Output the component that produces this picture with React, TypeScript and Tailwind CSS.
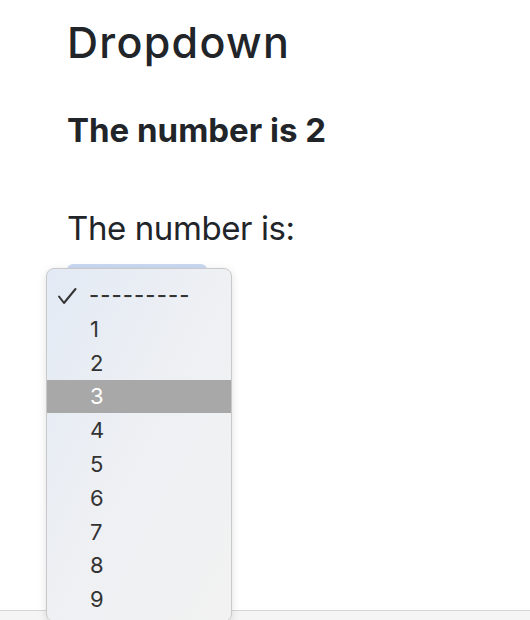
import React from "react";

const items = ["1", "2", "3", "4", "5", "6", "7", "8", "9"];

export default function App() {
  return (
    <div
      className="relative flex h-[620px] w-[530px] flex-col overflow-hidden bg-white text-[#212529]"
      style={{ fontFamily: "Inter, 'Liberation Sans', sans-serif" }}
    >
      <div className="flex-1 pl-[67px] pt-[17px]">
        <h1 className="text-[43px] font-medium leading-[1.2] tracking-[1.3px]">Dropdown</h1>
        <h3 className="mt-[42px] text-[33px] font-bold leading-[1.2] tracking-[0px]">The number is 2</h3>
        <p className="mt-[59px] text-[33px] font-normal leading-[1.2] tracking-[-0.4px]">The number is:</p>
        <div className="mt-[15px] h-[34px] w-[140px] rounded-md bg-gradient-to-b from-[#cbdaf2] to-[#b9cdee]" />
      </div>
      <div className="h-[10px] border-t border-[#d6d6d6] bg-[#f5f5f5]" />

      <div className="absolute left-[46px] top-[268px] h-[354px] w-[186px] rounded-lg border border-[#c9c9c9] bg-gradient-to-br from-[#e3eaf5] via-[#eef0f3] to-[#f2f2f2] pt-[9px] text-[22px] leading-none text-[#333] shadow-[0_2px_8px_rgba(0,0,0,0.12)]">
        <div className="flex h-[34px] items-center">
          <svg width="42" height="34" viewBox="0 0 42 34" className="shrink-0">
            <polyline points="12,18.5 17,25 28.5,11" fill="none" stroke="#333" strokeWidth="2" strokeLinecap="round" strokeLinejoin="round" />
          </svg>
          <span className="font-medium tracking-[1.1px]">---------</span>
        </div>
        {items.map((n) => (
          <div
            key={n}
            className={
              n === "3"
                ? "flex h-[33.8px] items-center bg-[#a8a8a8] pl-[43px] text-white"
                : "flex h-[33.8px] items-center pl-[43px]"
            }
          >
            {n}
          </div>
        ))}
      </div>
    </div>
  );
}
